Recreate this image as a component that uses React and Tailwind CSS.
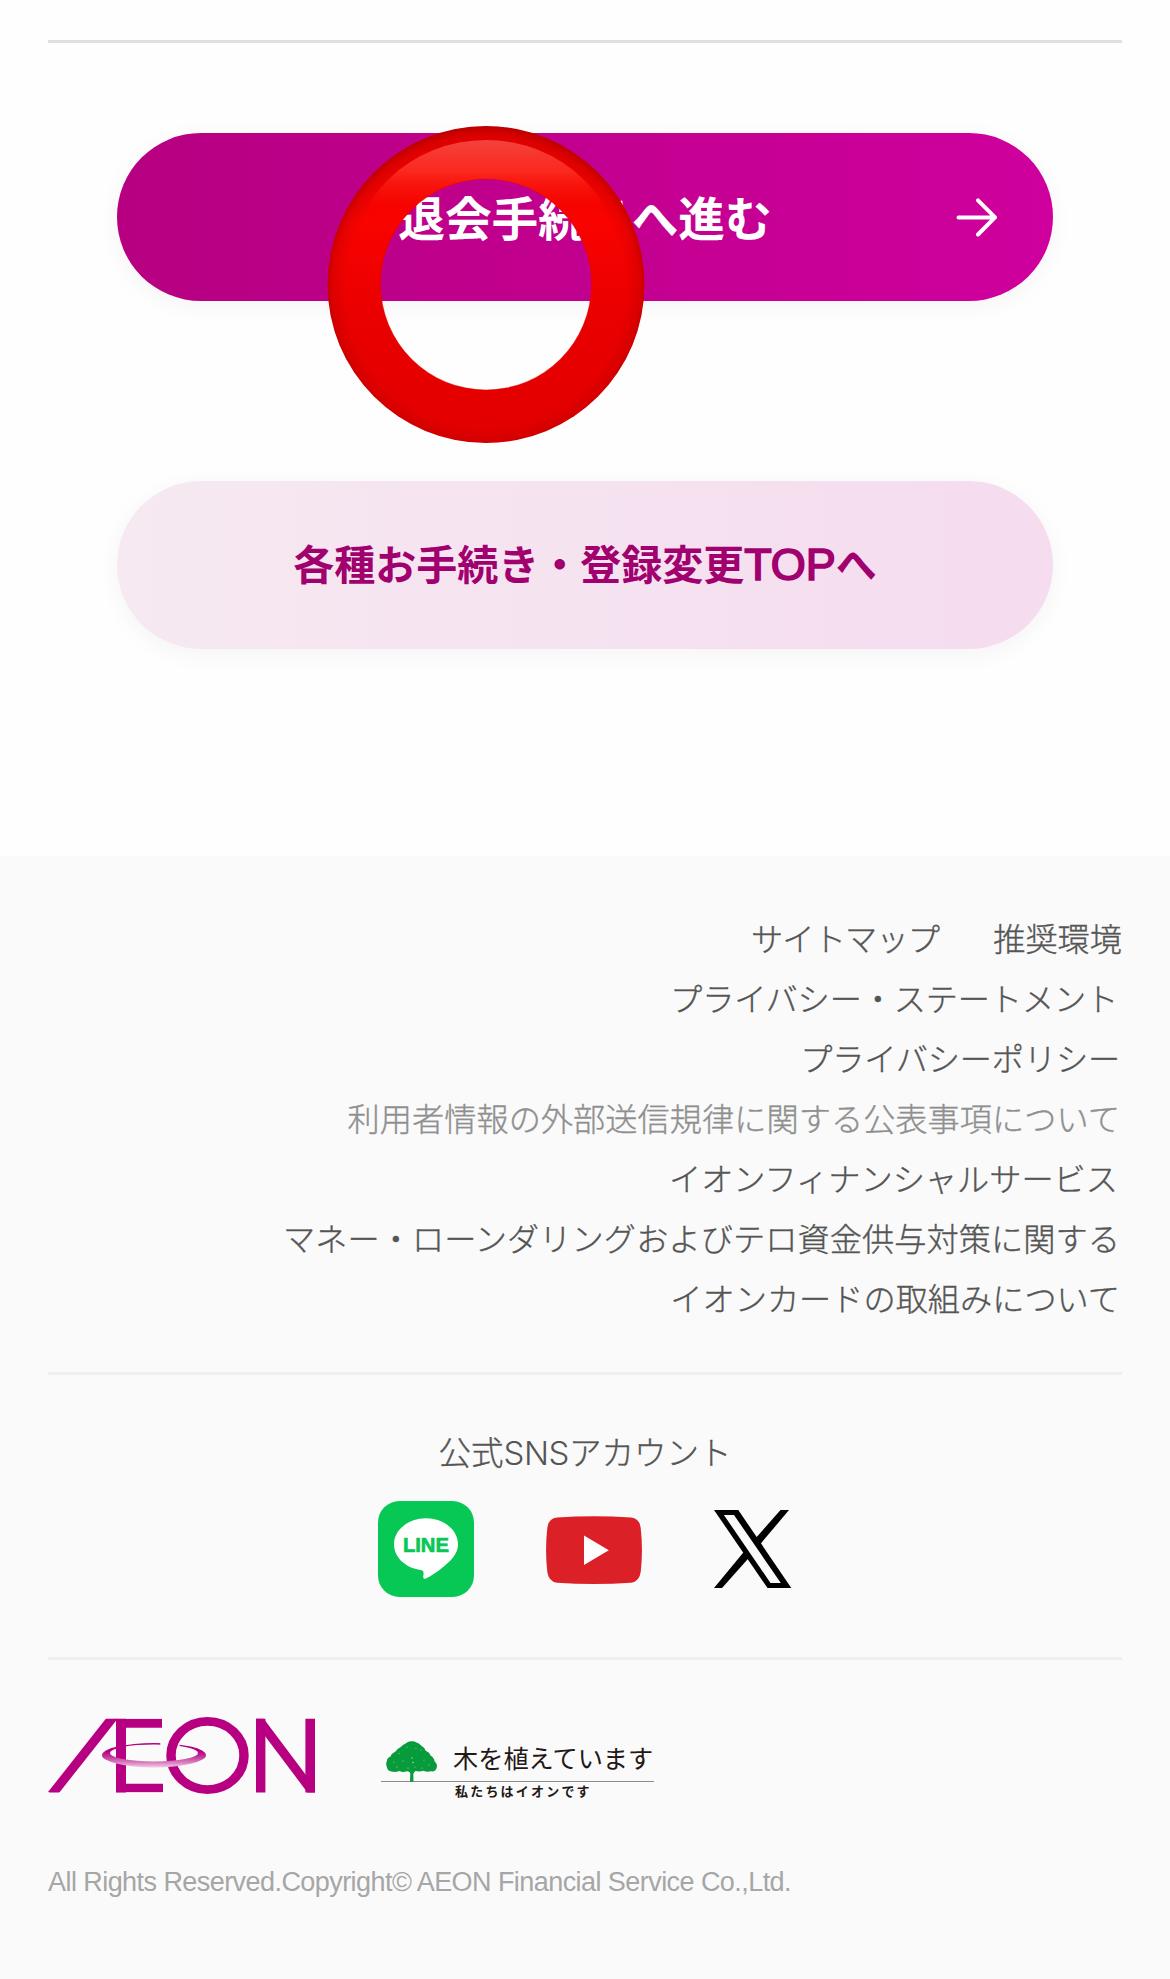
import React from "react";

const links = [
  { label: "プライバシー・ステートメント", shift: "mr-[4px] tracking-[-0.150px]" },
  { label: "プライバシーポリシー", shift: "mr-[2px] tracking-[-0.150px]" },
  { label: "利用者情報の外部送信規律に関する公表事項について", shift: "mr-[2px] tracking-[0.040px]", muted: true },
  { label: "イオンフィナンシャルサービス", shift: "mr-[4px]" },
  { label: "マネー・ローンダリングおよびテロ資金供与対策に関する", shift: "mr-[2px] tracking-[0.070px]" },
  { label: "イオンカードの取組みについて", shift: "mr-[2px]" },
];

function RedRing() {
  return (
    <svg
      className="pointer-events-none absolute left-[209.500px] -top-[8.500px]"
      width="318"
      height="319"
      viewBox="0 0 318 319"
    >
      <defs>
        <linearGradient id="ringBase" x1="0" y1="0" x2="0" y2="1">
          <stop offset="0" stopColor="#e80000" />
          <stop offset="0.3" stopColor="#f80300" />
          <stop offset="0.6" stopColor="#e90000" />
          <stop offset="1" stopColor="#e20000" />
        </linearGradient>
        <radialGradient id="ringEdge" gradientUnits="userSpaceOnUse" cx="159" cy="163" r="163">
          <stop offset="0.86" stopColor="#a80000" stopOpacity="0" />
          <stop offset="0.94" stopColor="#a80000" stopOpacity="0.25" />
          <stop offset="1" stopColor="#a00000" stopOpacity="0.7" />
        </radialGradient>
        <linearGradient id="ringGloss" gradientUnits="userSpaceOnUse" x1="0" y1="14" x2="0" y2="86">
          <stop offset="0" stopColor="#f3423d" />
          <stop offset="0.45" stopColor="#fb281e" />
          <stop offset="1" stopColor="#fb0a00" stopOpacity="0" />
        </linearGradient>
        <mask id="ringHole">
          <circle cx="159" cy="159.5" r="158.5" fill="white" />
          <circle cx="159" cy="159.5" r="105.4" fill="black" />
        </mask>
      </defs>
      <g mask="url(#ringHole)">
        <circle cx="159" cy="159.5" r="159" fill="url(#ringBase)" />
        <circle cx="159" cy="159.5" r="159" fill="url(#ringEdge)" />
        <ellipse cx="159" cy="147" rx="137" ry="132" fill="url(#ringGloss)" />
      </g>
      <circle cx="159" cy="159.5" r="105.4" fill="none" stroke="#d80000" strokeOpacity="0.35" />
    </svg>
  );
}

function LineIcon() {
  return (
    <svg width="96" height="96" viewBox="0 0 96 96">
      <rect width="96" height="96" rx="21.5" fill="#07c755" />
      <path
        d="M48 17.3C30.300 17.300 16 28.900 16 43.300C16 56.200 27.300 67 42.700 69C46 69.600 45.800 71.200 45.300 75.500C45.100 77.300 45.900 78.400 48 77.600C50.500 76.600 62.500 69.300 70.300 61.600C76.500 56 80 50 80 43.300C80 28.900 65.700 17.300 48 17.300Z"
        fill="#fff"
      />
      <text
        x="24.900"
        y="51.300"
        textLength="46"
        lengthAdjust="spacingAndGlyphs"
        fill="#07c755"
        stroke="#07c755"
        strokeWidth="0.7"
        strokeLinejoin="round"
        className="font-['Liberation_Sans',sans-serif] text-[21px] font-bold"
      >
        LINE
      </text>
    </svg>
  );
}

function YouTubeIcon() {
  return (
    <svg width="96" height="68" viewBox="0 0 96 68" className="relative top-[1px]">
      <path
        d="M11 1.600Q48 -1.200 85 1.600Q93.500 2.500 94.700 12Q97.200 34 94.700 56Q93.500 65.500 85 66.800Q48 69.200 11 66.800Q2.500 65.500 1.300 56Q-1.200 34 1.300 12Q2.500 2.500 11 1.600Z"
        fill="#dc2027"
      />
      <path d="M38 19.500V49L62.800 34.200Z" fill="#fff" />
    </svg>
  );
}

function XIcon() {
  return (
    <svg width="78" height="78" viewBox="0 0 78 78" fill="none">
      <path d="M66.500 0H75L46 34.500L40.500 29.500Z" fill="#000" />
      <path d="M0 78H8L36.500 46L31 40.500Z" fill="#000" />
      <path
        fillRule="evenodd"
        d="M0 0H24.300L77.300 78H53.500ZM9.900 5L56.500 73H66.800L20 5Z"
        fill="#000"
      />
    </svg>
  );
}

function AeonLogo() {
  return (
    <svg width="268" height="77" viewBox="0 0 268 77" role="img" aria-label="AEON">
      <defs>
        <clipPath id="capBand">
          <rect x="0" y="1.700" width="267" height="73.700" />
        </clipPath>
        <clipPath id="rightBand">
          <rect x="208" y="1.700" width="59" height="73.700" />
        </clipPath>
        <clipPath id="haloGap">
          <path d="M50 20H112.300V31H131.500V20H165V55H50Z" />
        </clipPath>
        <linearGradient id="halo" gradientUnits="userSpaceOnUse" x1="0" y1="34" x2="0" y2="51">
          <stop offset="0" stopColor="#b60081" />
          <stop offset="0.3" stopColor="#c22e98" />
          <stop offset="0.7" stopColor="#da86c2" />
          <stop offset="1" stopColor="#f3d6ea" />
        </linearGradient>
      </defs>
      <g clipPath="url(#capBand)" stroke="#b60081" fill="none">
        <line x1="3.800" y1="77.700" x2="65.600" y2="-0.700" strokeWidth="9.200" />
        <line x1="60" y1="2.400" x2="70" y2="2.400" strokeWidth="1.400" />
        <line x1="73" y1="0" x2="73" y2="77" strokeWidth="10" />
        <line x1="68" y1="6.200" x2="114" y2="6.200" strokeWidth="9" />
        <line x1="68" y1="71" x2="115" y2="71" strokeWidth="8.700" />
        <line x1="212.700" y1="0" x2="212.700" y2="77" strokeWidth="9.400" />
        <line x1="262.200" y1="0" x2="262.200" y2="77" strokeWidth="9.600" />
      </g>
      <line clipPath="url(#rightBand)" x1="208.400" y1="-0.300" x2="266.600" y2="77.300" stroke="#b60081" strokeWidth="9.300" />
      <circle cx="159.500" cy="38.500" r="35.600" fill="none" stroke="#b60081" strokeWidth="9.200" transform="translate(159.500 38.500) scale(1.025 0.957) translate(-159.500 -38.500)" />
      <path
        clipPath="url(#haloGap)"
        fillRule="evenodd"
        fill="url(#halo)"
        d="M54 38.200A52 12.200 0 0 1 158 38.200A52 12.200 0 0 1 54 38.200ZM62 35.900A44 8.500 0 0 0 150 35.900A44 8.500 0 0 0 62 35.900Z"
      />
    </svg>
  );
}

function TreeIcon() {
  return (
    <svg width="52" height="41" viewBox="0 0 52 41" className="ml-[5px]">
      <path
        d="M25 0.300Q28 -0.300 30.500 1.500Q33 2 35 4.500Q38 6 39.500 9.500Q43 11 44.500 14.500Q48 16.500 48.500 20Q51.500 23 50.800 26.500Q49.500 31 45 30.300Q41 31.500 37.500 29.800Q33 31 29.500 30Q28 31 27.300 33L27.500 40.800H24L24.300 32Q22.500 29.500 20 30.500Q16.500 31.500 13.500 30Q9 31.500 5.500 30.500Q1.500 30 1 26.500Q-0.500 23 0.800 20Q1 17 4.500 15.500Q6 12 9.500 10.500Q11.500 7.500 14 6.500Q17 3.500 20 2.300Q22 0.300 25 0.300Z"
        fill="#079b3b"
      />
      <g fill="#a9dcb9">
        <circle cx="13" cy="12.500" r="0.600" />
        <circle cx="21" cy="6" r="0.500" />
        <circle cx="30" cy="7.500" r="0.500" />
        <circle cx="35" cy="9" r="0.600" />
        <circle cx="17" cy="20" r="0.600" />
        <circle cx="8" cy="21" r="0.500" />
        <circle cx="26" cy="17" r="0.700" />
        <circle cx="27" cy="21.500" r="0.800" />
        <circle cx="11" cy="26" r="0.600" />
        <circle cx="22" cy="27" r="0.600" />
        <circle cx="29" cy="26" r="0.500" />
        <circle cx="38" cy="19" r="0.500" />
        <circle cx="43" cy="24" r="0.600" />
        <circle cx="36" cy="27" r="0.500" />
      </g>
    </svg>
  );
}

export default function App() {
  return (
    <div className="flex h-[1979px] w-[1170px] flex-col overflow-hidden bg-[#fefefe] font-['Liberation_Sans','Noto_Sans_CJK_JP',sans-serif]">
      <main className="h-[856px] px-12 pt-10">
        <div className="h-[3px] bg-[#e0e0e0]" />
        <div className="relative mx-auto mt-[90px] w-[936px]">
          <button className="relative flex h-[168px] w-full items-center justify-center rounded-full bg-linear-to-r from-[#b60081] to-[#cf009e] text-[46.700px] leading-none font-bold text-white shadow-[0_5px_24px_rgba(0,0,0,0.045)]">
            <span className="relative top-[3px]">退会手続きへ進む</span>
            <svg
              className="absolute right-[56px]"
              width="42"
              height="40"
              viewBox="0 0 42 40"
              fill="none"
              stroke="#fff"
              strokeWidth="4"
              strokeLinecap="round"
              strokeLinejoin="round"
            >
              <path d="M3.500 20.400H39.500M23 3.300L40 20.400L23 37.500" />
            </svg>
          </button>
          <RedRing />
        </div>
        <button className="mx-auto mt-[180px] flex h-[168px] w-[936px] items-center justify-center rounded-full bg-linear-to-r from-[#f6e9f1] to-[#f5dcef] text-[41px] leading-none font-bold text-[#a1006f] shadow-[0_5px_24px_rgba(0,0,0,0.045)]">
          <span className="relative -top-[1px]">
            各種お手続き・登録変更
            <span className="text-[45px] font-normal [-webkit-text-stroke:1.700px_#a1006f]">TOP</span>へ
          </span>
        </button>
      </main>

      <footer className="flex grow flex-col bg-[#fafafa] px-12 pt-[54px] text-[#555]">
        <nav className="flex flex-col items-end text-[32.200px] leading-[60px] font-light [-webkit-text-stroke:0.350px_currentColor]">
          <div className="flex gap-[54px]">
            <a className="tracking-[-0.800px]">サイトマップ</a>
            <a>推奨環境</a>
          </div>
          {links.map((l) => (
            <a key={l.label} className={`${l.shift} ${l.muted ? "text-[#8f8f8f]" : ""}`}>
              {l.label}
            </a>
          ))}
        </nav>

        <section className="mt-[42px] h-[285px] border-t-[3px] border-[#efefef]">
          <h2 className="mt-[48px] text-center text-[32.500px] leading-[60px] font-light [-webkit-text-stroke:0.350px_currentColor]">
            公式<span className="font-['Inter',sans-serif] text-[33px] tracking-[-0.500px] [-webkit-text-stroke:0px]">SNS</span>アカウント
          </h2>
          <div className="mt-[17px] flex items-center justify-center gap-[72px]">
            <LineIcon />
            <YouTubeIcon />
            <XIcon />
          </div>
        </section>

        <section className="border-t-[3px] border-[#efefef] pt-[57px]">
          <div className="flex">
            <AeonLogo />
            <div className="mt-[24px] ml-[65px] w-[273px]">
              <div className="flex h-[40px]">
                <TreeIcon />
                <span className="mt-[4px] ml-[15px] text-[25.200px] leading-[28px] whitespace-nowrap text-[#231815]">木を植えています</span>
              </div>
              <div className="h-px bg-[#8c8c8c]" />
              <div className="mt-[3px] ml-[74px] text-[13px] leading-[14px] font-bold tracking-[2.200px] whitespace-nowrap text-[#231815]">
                私たちはイオンです
              </div>
            </div>
          </div>
          <p className="mt-[63px] text-[27px] leading-[40px] tracking-[-0.560px] whitespace-nowrap text-[#a6a6a6]">
            All Rights Reserved.Copyright© AEON Financial Service Co.,Ltd.
          </p>
        </section>
      </footer>
    </div>
  );
}
